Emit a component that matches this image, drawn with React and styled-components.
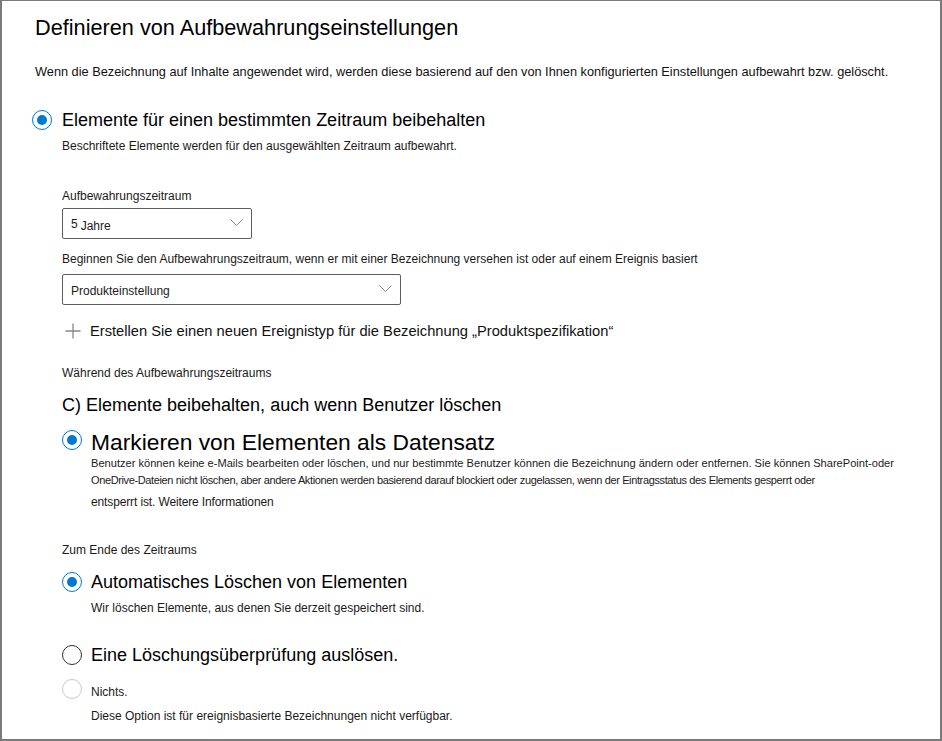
import React from "react";
import styled, { createGlobalStyle } from "styled-components";

const GlobalStyle = createGlobalStyle`
  html, body {
    margin: 0;
    padding: 0;
    background: #ffffff;
  }
  body {
    font-family: "Liberation Sans", Arial, sans-serif;
    color: #000000;
  }
`;

const Frame = styled.div`
  box-sizing: border-box;
  width: 942px;
  height: 741px;
  border: 2px solid #7a7a7a;
  border-top-width: 1px;
  padding: 13px 0 0 30px;
  overflow: hidden;
  background: #ffffff;
`;

const Title = styled.h1`
  margin: 0 0 0 3px;
  font-size: 21.7px;
  font-weight: 400;
  line-height: 28px;
  color: #000;
`;

const Intro = styled.p`
  margin: 21px 0 0 3px;
  font-size: 12.75px;
  line-height: 18px;
  color: #111;
`;

const Indent = styled.div`
  padding-left: ${(p) => p.$pad || 0}px;
`;

const RadioRow = styled.label`
  display: flex;
  align-items: center;
  gap: ${(p) => p.$gap || 9}px;
  margin-top: ${(p) => p.$mt || 0}px;
  height: ${(p) => p.$h || 24}px;
`;

const Dot = styled.span`
  box-sizing: border-box;
  flex: none;
  width: 20px;
  height: 20px;
  border-radius: 50%;
  border: 1px solid
    ${(p) => (p.$checked ? "#0078d4" : p.$disabled ? "#c8c8c8" : "#323130")};
  display: flex;
  align-items: center;
  justify-content: center;
  &::after {
    content: "";
    width: 10px;
    height: 10px;
    border-radius: 50%;
    background: ${(p) => (p.$checked ? "#0078d4" : "transparent")};
  }
`;

const RadioLabel = styled.span`
  font-size: ${(p) => p.$size || 18}px;
  line-height: ${(p) => p.$h || 24}px;
  color: ${(p) => p.$color || "#000"};
  padding-top: ${(p) => p.$pt || 0}px;
  white-space: nowrap;
`;

const Small = styled.div`
  margin-top: ${(p) => p.$mt || 0}px;
  font-size: ${(p) => p.$size || 12}px;
  line-height: ${(p) => p.$h || 16}px;
  letter-spacing: ${(p) => p.$ls || 0}px;
  color: #1b1a19;
  white-space: nowrap;
`;

const Select = styled.div`
  box-sizing: border-box;
  margin-top: ${(p) => p.$mt || 0}px;
  width: ${(p) => p.$w}px;
  height: 31px;
  border: 1px solid #605e5c;
  border-radius: 2px;
  display: flex;
  align-items: center;
  justify-content: space-between;
  padding: 3px 8px 0 8px;
  font-size: 12px;
  color: #1b1a19;
`;

const Chevron = () => (
  <svg width="13" height="8" viewBox="0 0 13 8" style={{ marginTop: -4 }}>
    <path d="M0.5 0.5 L6.5 6.5 L12.5 0.5" fill="none" stroke="#8a8886" strokeWidth="1" />
  </svg>
);

const Num = styled.span`
  font-size: 12px;
  vertical-align: 2px;
  margin-right: 3px;
`;

const AddLink = styled.div`
  display: flex;
  align-items: center;
  gap: 9px;
  margin-top: 16px;
  height: 20px;
  padding-left: 3px;
  font-size: 14.7px;
  color: #111;
`;

const Heading = styled.div`
  margin-top: 13px;
  font-size: 18px;
  line-height: 22px;
  color: #000;
`;

const Para = styled.div`
  padding-left: 29px;
`;

const App = () => {
  return (
    <>
      <GlobalStyle />
      <Frame>
        <Title>Definieren von Aufbewahrungseinstellungen</Title>
        <Intro>
          Wenn die Bezeichnung auf Inhalte angewendet wird, werden diese basierend auf den von Ihnen
          konfigurierten Einstellungen aufbewahrt bzw. gelöscht.
        </Intro>

        <RadioRow $mt={27} $gap={10}>
          <Dot $checked />
          <RadioLabel>Elemente für einen bestimmten Zeitraum beibehalten</RadioLabel>
        </RadioRow>

        <Indent $pad={30}>
          <Small $mt={6}>
            Beschriftete Elemente werden für den ausgewählten Zeitraum aufbewahrt.
          </Small>

          <Small $mt={34}>Aufbewahrungszeitraum</Small>
          <Select $mt={4} $w={190}>
            <span>
              <Num>5</Num>Jahre
            </span>
            <Chevron />
          </Select>

          <Small $mt={12}>
            Beginnen Sie den Aufbewahrungszeitraum, wenn er mit einer Bezeichnung versehen ist oder
            auf einem Ereignis basiert
          </Small>
          <Select $mt={7} $w={339}>
            <span>Produkteinstellung</span>
            <Chevron />
          </Select>

          <AddLink>
            <svg width="16" height="16" viewBox="0 0 16 16">
              <path d="M8 0.5 V15.5 M0.5 8 H15.5" stroke="#8a8886" strokeWidth="1.3" fill="none" />
            </svg>
            <span>Erstellen Sie einen neuen Ereignistyp für die Bezeichnung „Produktspezifikation“</span>
          </AddLink>

          <Small $mt={24}>Während des Aufbewahrungszeitraums</Small>
          <Heading>C) Elemente beibehalten, auch wenn Benutzer löschen</Heading>

          <RadioRow $mt={9} $h={30}>
            <Dot $checked />
            <RadioLabel $size={22.8} $h={30} $pt={3}>
              Markieren von Elementen als Datensatz
            </RadioLabel>
          </RadioRow>
          <Para>
            <Small $h={17} $size={11.1}>
              Benutzer können keine e-Mails bearbeiten oder löschen, und nur bestimmte Benutzer können
              die Bezeichnung ändern oder entfernen. Sie können SharePoint-oder
            </Small>
            <Small $h={17} $size={11} $ls={-0.37}>
              OneDrive-Dateien nicht löschen, aber andere Aktionen werden basierend darauf blockiert
              oder zugelassen, wenn der Eintragsstatus des Elements gesperrt oder
            </Small>
            <Small $h={17} $mt={5} $ls={-0.13}>
              entsperrt ist. Weitere Informationen
            </Small>
          </Para>

          <Small $mt={31}>Zum Ende des Zeitraums</Small>
          <RadioRow $mt={12}>
            <Dot $checked />
            <RadioLabel>Automatisches Löschen von Elementen</RadioLabel>
          </RadioRow>
          <Para>
            <Small $mt={6}>Wir löschen Elemente, aus denen Sie derzeit gespeichert sind.</Small>
          </Para>

          <RadioRow $mt={27}>
            <Dot />
            <RadioLabel>Eine Löschungsüberprüfung auslösen.</RadioLabel>
          </RadioRow>
          <RadioRow $mt={10}>
            <Dot $disabled />
            <RadioLabel $size={12} $pt={5} $color="#1b1a19">
              Nichts.
            </RadioLabel>
          </RadioRow>
          <Para>
            <Small $mt={7}>
              Diese Option ist für ereignisbasierte Bezeichnungen nicht verfügbar.
            </Small>
          </Para>
        </Indent>
      </Frame>
    </>
  );
};

export default App;
